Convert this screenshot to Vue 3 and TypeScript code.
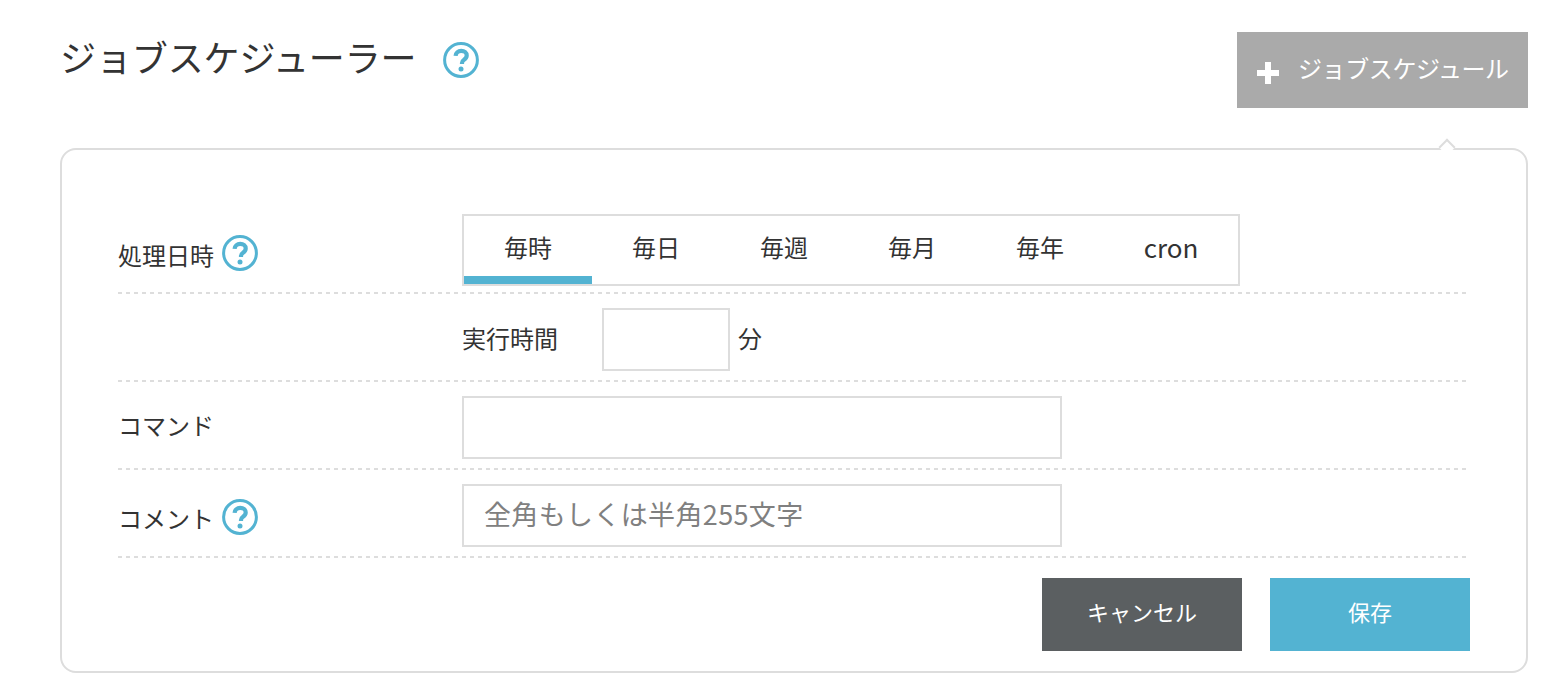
<script setup lang="ts">
const tabs: string[] = ['毎時', '毎日', '毎週', '毎月', '毎年', 'cron']
</script>

<template>
  <main class="page">
    <header class="head">
      <div class="title-wrap">
        <h1 class="title">ジョブスケジューラー</h1>
        <svg class="help" viewBox="0 0 36 36" aria-hidden="true">
          <circle cx="18" cy="18" r="16.4" fill="none" stroke="#53b3d2" stroke-width="3" />
          <path d="M12.600 13.800c.2-3 2.500-4.900 5.600-4.900 3.300 0 5.500 1.900 5.500 4.500 0 2-1 3.100-2.700 4.300-1.500 1-2 1.700-2 3.400v.8" fill="none" stroke="#53b3d2" stroke-width="4.200" />
          <circle cx="18" cy="27" r="2.500" fill="#53b3d2" />
        </svg>
      </div>
      <button class="add" type="button">
        <svg class="plus" viewBox="0 0 24 24" aria-hidden="true">
          <path d="M9 1h6v8h8v6h-8v8H9v-8H1V9h8z" fill="#fff" />
        </svg>
        <span>ジョブスケジュール</span>
      </button>
    </header>

    <section class="panel">
      <div class="row row-first">
        <div class="label label-date">
          <span>処理日時</span>
          <svg class="help" viewBox="0 0 36 36" aria-hidden="true">
            <circle cx="18" cy="18" r="16.4" fill="none" stroke="#53b3d2" stroke-width="3" />
            <path d="M12.600 13.800c.2-3 2.500-4.900 5.600-4.900 3.300 0 5.500 1.900 5.500 4.500 0 2-1 3.100-2.700 4.300-1.500 1-2 1.700-2 3.400v.8" fill="none" stroke="#53b3d2" stroke-width="4.200" />
            <circle cx="18" cy="27" r="2.500" fill="#53b3d2" />
          </svg>
        </div>
        <div class="tabs">
          <button
            v-for="(t, i) in tabs"
            :key="t"
            class="tab"
            :class="{ active: i === 0, latin: t === 'cron' }"
            type="button"
          >{{ t }}</button>
        </div>
      </div>

      <div class="row">
        <div class="label"></div>
        <div class="time">
          <span class="time-label">実行時間</span>
          <input class="field field-small" type="text" />
          <span class="unit">分</span>
        </div>
      </div>

      <div class="row">
        <div class="label label-command">コマンド</div>
        <input class="field field-wide" type="text" />
      </div>

      <div class="row">
        <div class="label label-comment">
          <span>コメント</span>
          <svg class="help" viewBox="0 0 36 36" aria-hidden="true">
            <circle cx="18" cy="18" r="16.4" fill="none" stroke="#53b3d2" stroke-width="3" />
            <path d="M12.600 13.800c.2-3 2.500-4.900 5.600-4.900 3.300 0 5.500 1.900 5.500 4.500 0 2-1 3.100-2.700 4.300-1.500 1-2 1.700-2 3.400v.8" fill="none" stroke="#53b3d2" stroke-width="4.200" />
            <circle cx="18" cy="27" r="2.500" fill="#53b3d2" />
          </svg>
        </div>
        <input class="field field-wide field-note" type="text" placeholder="全角もしくは半角255文字" />
      </div>

      <div class="actions">
        <button class="btn cancel" type="button">キャンセル</button>
        <button class="btn save" type="button">保存</button>
      </div>

      <span class="arrow"></span>
    </section>
  </main>
</template>

<style>
html, body { margin: 0; background: #fff; overflow: hidden; }
</style>

<style scoped>
.page {
  box-sizing: border-box;
  width: 1558px;
  height: 680px;
  padding: 32px 30px 0 60px;
  font-family: "Noto Sans CJK JP", "Noto Sans", sans-serif;
  color: #333;
  font-size: 24px;
}
.head {
  display: flex;
  justify-content: space-between;
  align-items: flex-start;
  height: 76px;
  margin-bottom: 40px;
}
.title-wrap {
  display: flex;
  align-items: center;
  gap: 27px;
  height: 56px;
}
.title {
  margin: -8px 0 0;
  font-size: 36px;
  font-weight: 400;
  line-height: 52px;
  letter-spacing: -0.1px;
  white-space: nowrap;
}
.help { display: block; width: 36px; height: 36px; flex: none; }
.add {
  display: flex;
  align-items: center;
  width: 291px;
  height: 76px;
  padding: 0 0 0 19px;
  box-sizing: border-box;
  border: 0;
  background: #aaa;
  color: #fff;
  font: inherit;
}
.plus { width: 24px; height: 24px; margin: 5px 18px 0 0; }
.add span { margin-top: -6px; letter-spacing: -0.4px; white-space: nowrap; }
.panel {
  position: relative;
  box-sizing: border-box;
  height: 525px;
  padding: 64px 60px 0 56px;
  border: 2px solid #ddd;
  border-radius: 16px;
}
.arrow {
  position: absolute;
  top: -9px;
  left: 1379px;
  width: 12px;
  height: 12px;
  box-sizing: border-box;
  border-top: 2px solid #ddd;
  border-left: 2px solid #ddd;
  background: #fff;
  transform: rotate(45deg);
}
.row {
  display: flex;
  align-items: center;
  padding: 14px 0 11px;
  background: linear-gradient(to right, #ddd 4px, transparent 4px) left bottom / 8px 2px repeat-x;
}
.row-first { padding: 0 0 8px; }
.label {
  display: flex;
  align-items: center;
  gap: 8px;
  flex: none;
  width: 344px;
  white-space: nowrap;
}
.label-date span { margin-top: 8px; }
.label-date svg { margin-top: 6px; }
.label-command { margin-top: -6px; }
.label-comment span { margin-top: 4px; }
.label-comment svg { margin-top: 2px; }
.tabs {
  display: flex;
  box-sizing: border-box;
  width: 778px;
  height: 72px;
  border: 2px solid #ddd;
}
.tab {
  box-sizing: border-box;
  width: 128px;
  height: 68px;
  padding: 0;
  border: 0;
  border-bottom: 8px solid transparent;
  background: none;
  color: inherit;
  font: inherit;
}
.tab.active { border-bottom-color: #53b3d2; }
.tab.latin { padding-left: 6px; font-size: 26px; }
.time { display: flex; align-items: center; }
.time-label { width: 140px; margin-top: -4px; }
.unit { margin-top: -4px; }
.field {
  box-sizing: border-box;
  height: 63px;
  padding: 0 20px;
  border: 2px solid #ddd;
  border-radius: 0;
  outline: 0;
  background: #fff;
  color: inherit;
  font: inherit;
}
.field::placeholder { color: #808080; opacity: 1; }
.field-small { width: 128px; margin-right: 8px; }
.field-wide { width: 600px; }
.field-note { padding-bottom: 4px; font-size: 27px; letter-spacing: 0.35px; }
.actions {
  display: flex;
  justify-content: flex-end;
  gap: 28px;
  margin: 20px -4px 0 0;
}
.btn {
  width: 200px;
  height: 73px;
  padding: 0 0 8px;
  border: 0;
  color: #fff;
  font: inherit;
  font-size: 22px;
}
.cancel { background: #5b5f61; }
.save { background: #53b3d2; }
</style>
